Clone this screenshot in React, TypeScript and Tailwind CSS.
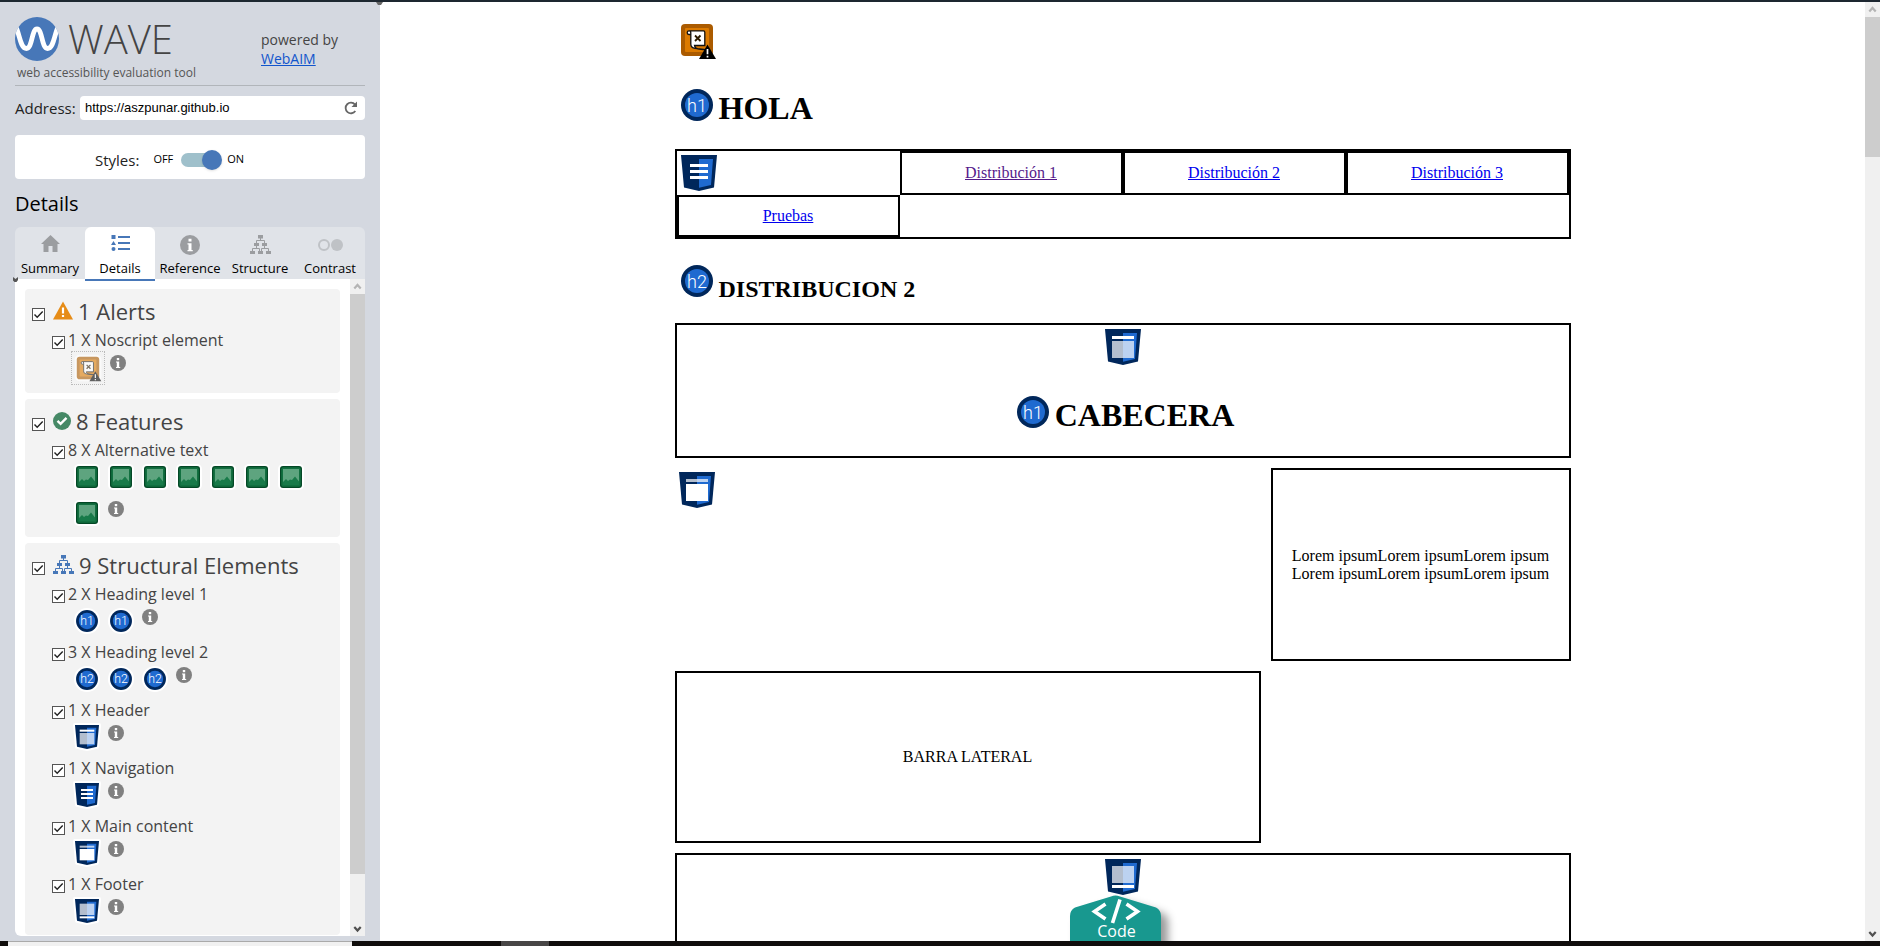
import React from "react";

type BadgeKind = "h1" | "h2" | "header" | "nav" | "main" | "footer" | "alt" | "noscript";

const shieldKinds: BadgeKind[] = ["header", "nav", "main", "footer"];

function Circle({ label }: { label: string }) {
  return (
    <g>
      <circle cx="16" cy="16" r="16" fill="#00275b" />
      <circle cx="16" cy="16" r="12" fill="#1f6ad0" />
      <text
        x="16"
        y="22.5"
        textAnchor="middle"
        fontSize="18"
        fontWeight="300"
        fontFamily="Roboto, sans-serif"
        fill="#fff"
      >
        {label}
      </text>
    </g>
  );
}

function ShieldShape({ kind }: { kind: BadgeKind }) {
  return (
    <g>
      <path d="M0 0H36L33 32.6L18 36L3 32.6Z" fill="#00275b" />
      <path d="M18 4H32L30 30L18 32.8Z" fill="#1f6ad0" />
      {kind === "header" && (
        <g fill="#fff">
          <rect x="7" y="7" width="22" height="3" />
          <rect x="7" y="12" width="22" height="17" opacity="0.7" />
        </g>
      )}
      {kind === "main" && (
        <g fill="#fff">
          <rect x="7" y="7" width="22" height="3" opacity="0.7" />
          <rect x="7" y="12" width="22" height="17" />
        </g>
      )}
      {kind === "footer" && (
        <g fill="#fff">
          <rect x="7" y="7" width="22" height="17" opacity="0.7" />
          <rect x="7" y="26" width="22" height="3" />
        </g>
      )}
      {kind === "nav" && (
        <g fill="#fff">
          <rect x="9" y="9" width="18" height="3" />
          <rect x="9" y="15" width="18" height="3" />
          <rect x="9" y="21" width="18" height="3" />
        </g>
      )}
    </g>
  );
}

function NoscriptShape() {
  return (
    <g>
      <rect width="32" height="32" rx="4" fill="#ab5b00" />
      <rect x="4" y="4" width="24" height="24" rx="1" fill="#dc7a00" />
      <path
        d="M9.8 10.5H8A1.7 1.7 0 1 1 8 6.9H22.5A1.5 1.5 0 0 1 23.8 8.3V21.5H13.5C14 25 18 25.4 25 25.6L14 24.4C10.5 24 9.8 22.5 9.8 20V9C9.8 7.6 9.2 6.9 8.5 6.9"
        fill="#fff"
        stroke="#111"
        strokeWidth="1.300"
      />
      <path d="M14 11.500L19.500 17M19.500 11.500L14 17" stroke="#2a1a00" strokeWidth="1.800" />
      <path d="M26.500 20.500L35 35H18Z" fill="#000" />
      <path d="M26.500 25V30.200M26.500 31.800V33.600" stroke="#fff" strokeWidth="1.700" />
    </g>
  );
}

function BigBadge({ kind }: { kind: BadgeKind }) {
  if (kind === "noscript")
    return (
      <svg className="block h-9 w-9" viewBox="0 0 36 36" aria-hidden="true">
        <NoscriptShape />
      </svg>
    );
  if (shieldKinds.includes(kind))
    return (
      <svg className="block h-9 w-9 shrink-0" viewBox="0 0 36 36" aria-hidden="true">
        <ShieldShape kind={kind} />
      </svg>
    );
  return (
    <svg className="block h-8 w-8 shrink-0" viewBox="0 0 32 32" aria-hidden="true">
      <Circle label={kind} />
    </svg>
  );
}

function SmallBadge({ kind }: { kind: BadgeKind }) {
  if (shieldKinds.includes(kind))
    return (
      <svg className="h-7 w-7" viewBox="-3 -3 42 42" aria-hidden="true">
        <path d="M0 0H36L33 32.6L18 36L3 32.6Z" fill="#fff" stroke="#fff" strokeWidth="6" strokeLinejoin="round" />
        <ShieldShape kind={kind} />
      </svg>
    );
  if (kind === "alt")
    return (
      <svg className="h-[26px] w-[26px]" viewBox="0 0 26 26" aria-hidden="true">
        <rect width="26" height="26" rx="5" fill="#fff" />
        <rect x="2" y="2" width="22" height="22" rx="3" fill="#044826" />
        <rect x="3.2" y="3.2" width="19.6" height="19.6" rx="2" fill="#127040" />
        <rect x="5" y="5" width="16" height="16" fill="#5ea47f" />
        <path d="M5 18L8 15L10 17L12 15.500L14 16L17 12.500L21 17.500V21H5Z" fill="#187a49" />
      </svg>
    );
  if (kind === "noscript")
    return (
      <svg className="h-[28px] w-[28px] opacity-60" viewBox="-4 -4 40 40" aria-hidden="true">
        <rect x="-3" y="-3" width="38" height="38" rx="7" fill="#fff" />
        <NoscriptShape />
      </svg>
    );
  return (
    <svg className="h-[26px] w-[26px]" viewBox="-3 -3 38 38" aria-hidden="true">
      <circle cx="16" cy="16" r="19" fill="#fff" />
      <Circle label={kind} />
    </svg>
  );
}

function InfoIcon({ className, color }: { className: string; color: string }) {
  return (
    <svg className={className} viewBox="0 0 16 16" aria-hidden="true">
      <circle cx="8" cy="8" r="8" fill={color} />
      <rect x="6.800" y="3" width="2.400" height="2.200" fill="#fff" />
      <path d="M6 6.500H9.200V12H10.200V13H6V12H6.800V7.500H6Z" fill="#fff" />
    </svg>
  );
}

function StructureIcon({ className, color }: { className: string; color: string }) {
  return (
    <svg className={className} viewBox="0 0 21 19" fill={color} aria-hidden="true">
      <rect x="8" y="0" width="5" height="3.500" />
      <rect x="4" y="8" width="5" height="3" />
      <rect x="12" y="8" width="5" height="3" />
      <rect x="0" y="16" width="5" height="3" />
      <rect x="8" y="16" width="5" height="3" />
      <rect x="16" y="16" width="5" height="3" />
      <path
        d="M10.500 3V5.500M6.500 8V5.500H14.500V8M2.500 16V13.500H8.500M6.500 11V13.500H9.500V16M14.500 11V13.500M11.500 16V13.500H18.500V16"
        fill="none"
        stroke={color}
      />
    </svg>
  );
}

function Check({ id }: { id: string }) {
  return (
    <span className="relative block h-[13px] w-[13px] shrink-0">
      <input
        id={id}
        type="checkbox"
        defaultChecked
        className="peer block h-[13px] w-[13px] appearance-none border border-[#555] bg-white"
      />
      <svg
        className="pointer-events-none absolute inset-0 hidden h-[13px] w-[13px] peer-checked:block"
        viewBox="0 0 13 13"
        aria-hidden="true"
      >
        <path d="M2.500 6.500L5.200 9.300L10.700 3.500" fill="none" stroke="#222" strokeWidth="1.400" />
      </svg>
    </span>
  );
}

function Item({ id, label, badges }: { id: string; label: string; badges: BadgeKind[] }) {
  return (
    <li>
      <div className="flex h-[22px] items-start gap-[3px] pl-[27px]">
        <span className="pt-[7px]">
          <Check id={id} />
        </span>
        <label htmlFor={id} className="text-base leading-[22px]">
          {label}
        </label>
      </div>
      <div className="flex flex-wrap gap-y-1 pb-1 pl-[45px] pr-6">
        {badges.map((kind, i) =>
          kind === "noscript" ? (
            <button
              key={i}
              aria-label={label}
              className="mx-px grid h-[34px] w-[34px] place-items-center border border-dotted border-[#bbb]"
            >
              <SmallBadge kind={kind} />
            </button>
          ) : (
            <button key={i} aria-label={label} className="grid h-8 w-[34px] place-items-center">
              <SmallBadge kind={kind} />
            </button>
          ),
        )}
        <button aria-label={"Reference: " + label} className="ml-1 mt-1 block h-4 w-4">
          <InfoIcon className="h-4 w-4" color="#808080" />
        </button>
      </div>
    </li>
  );
}

function Group({
  id,
  title,
  icon,
  children,
}: {
  id: string;
  title: string;
  icon: React.ReactNode;
  children: React.ReactNode;
}) {
  return (
    <section className="shrink-0 rounded bg-[#f3f3f3] pb-1">
      <div className="flex h-10 items-start pl-[7px]">
        <span className="pt-[19px]">
          <Check id={id} />
        </span>
        <span className="ml-2 pt-3">{icon}</span>
        <label htmlFor={id} className="ml-[5px] pt-[6px] text-[22px] leading-8">
          {title}
        </label>
      </div>
      <ul>{children}</ul>
    </section>
  );
}

function Chevron({ up, color }: { up?: boolean; color: string }) {
  return (
    <svg className="h-[15px] w-[15px] shrink-0" viewBox="0 0 15 15" aria-hidden="true">
      <path
        d={up ? "M4.300 9.500L7.500 6L10.700 9.500" : "M4.300 6L7.500 9.500L10.700 6"}
        fill="none"
        stroke={color}
        strokeWidth="2.200"
      />
    </svg>
  );
}

function Tab({ label, active, children }: { label: string; active?: boolean; children: React.ReactNode }) {
  return (
    <button
      role="tab"
      aria-selected={!!active}
      className={
        active
          ? "flex flex-col items-center rounded-t-md border-b-2 border-[#4777b8] bg-white pt-2"
          : "flex flex-col items-center border-b-2 border-transparent pt-2"
      }
    >
      <span className="flex h-[22px] items-start">{children}</span>
      <span className="text-[13px] leading-[22px] text-black">{label}</span>
    </button>
  );
}

function Sidebar() {
  return (
    <aside className="relative flex w-[380px] shrink-0 flex-col bg-[#d4d8e0] px-[15px] pb-[5px] font-['Open_Sans',sans-serif] text-[#444]">
      <header className="flex h-[84px] shrink-0 justify-between border-b border-[#b1b5ba] pt-[15px]">
        <div>
          <div className="flex h-[44px] items-center gap-[9px]">
            <svg className="h-11 w-11" viewBox="0 0 44 44" aria-hidden="true">
              <defs>
                <clipPath id="disc">
                  <circle cx="22" cy="22" r="22" />
                </clipPath>
              </defs>
              <circle cx="22" cy="22" r="22" fill="#4777b8" />
              <path
                d="M0 8C5 17 5 31.500 11.500 31.500C17.500 31.500 16.500 12 22 12C27.500 12 26.500 31.500 32.500 31.500C39 31.500 39 17 44 8"
                fill="none"
                stroke="#fff"
                strokeWidth="4.800"
                clipPath="url(#disc)"
              />
            </svg>
            <h1 className="text-[40px] font-light leading-[44px]">WAVE</h1>
          </div>
          <p className="pl-[2px] text-xs leading-6 text-[#555]">web accessibility evaluation tool</p>
        </div>
        <p className="w-[104px] pt-[13px] text-sm leading-[19px]">
          powered by
          <br />
          <a href="#webaim" className="text-[#1155cc] underline">
            WebAIM
          </a>
        </p>
      </header>

      <div className="mt-[10px] flex h-6 shrink-0 items-center justify-between">
        <label htmlFor="address" className="text-[15px] leading-[22px] text-[#222]">
          Address:
        </label>
        <div className="flex h-6 w-[285px] items-center rounded bg-white pl-[5px] pr-[7px]">
          <input
            id="address"
            type="text"
            defaultValue="https://aszpunar.github.io"
            className="min-w-0 flex-1 bg-transparent font-['Liberation_Sans',sans-serif] text-[13px] text-black outline-none"
          />
          <button aria-label="Reload">
            <svg className="block h-[14px] w-[14px]" viewBox="0 0 14 14" aria-hidden="true">
              <path d="M11.300 10A5.300 5.300 0 1 1 11 3.600" fill="none" stroke="#666" strokeWidth="1.800" />
              <path d="M13 0.500V6H7.500Z" fill="#666" />
            </svg>
          </button>
        </div>
      </div>

      <div className="mt-[15px] flex h-11 shrink-0 items-center rounded bg-white pl-20 pt-[5px]">
        <label htmlFor="styles" className="text-[15px] leading-6 text-[#222]">
          Styles:
        </label>
        <span className="ml-[14px] text-[11px] text-black">OFF</span>
        <span className="relative ml-2 block h-5 w-[41px]">
          <input
            id="styles"
            type="checkbox"
            role="switch"
            defaultChecked
            className="peer mt-[3px] block h-[14px] w-10 appearance-none rounded-full bg-[#9fc0cb]"
          />
          <span className="pointer-events-none absolute left-0 top-0 h-5 w-5 rounded-full bg-[#4777b8] shadow peer-checked:left-[21px]" />
        </span>
        <span className="ml-[5px] text-[11px] text-black">ON</span>
      </div>

      <h2 className="mt-[9px] h-[39px] shrink-0 text-xl leading-[31px] text-black">Details</h2>

      <div className="relative shrink-0">
        <div role="tablist" className="grid h-[52px] grid-cols-5 rounded-t-md bg-[#e0e3e8]">
          <Tab label="Summary">
            <svg className="h-[17px] w-[19px]" viewBox="0 0 19 17" fill="#9b9da0" aria-hidden="true">
              <path d="M9.500 0L19 9H16.500V17H11.500V11H7.500V17H2.500V9H0Z" />
            </svg>
          </Tab>
          <Tab label="Details" active>
            <svg className="h-4 w-[19px]" viewBox="0 0 19 16" fill="#4777b8" aria-hidden="true">
              <rect x="0.500" y="0" width="4" height="4" />
              <path d="M2.500 6L5 10H0Z" />
              <circle cx="2.500" cy="14" r="2" />
              <rect x="7" y="1" width="12" height="2" />
              <rect x="7" y="7" width="12" height="2" />
              <rect x="7" y="13" width="12" height="2" />
            </svg>
          </Tab>
          <Tab label="Reference">
            <InfoIcon className="h-5 w-5" color="#9b9da0" />
          </Tab>
          <Tab label="Structure">
            <StructureIcon className="h-[19px] w-[21px]" color="#9b9da0" />
          </Tab>
          <Tab label="Contrast">
            <svg className="h-5 w-[26px]" viewBox="0 0 26 20" aria-hidden="true">
              <circle cx="7" cy="10" r="5" fill="none" stroke="#bfc2c6" strokeWidth="2" />
              <circle cx="20" cy="10" r="6" fill="#bfc2c6" />
            </svg>
          </Tab>
        </div>
        <svg className="absolute -bottom-[3px] -left-[2px] h-[5px] w-[5px]" viewBox="0 0 5 5" aria-hidden="true">
          <path d="M0 0L2.500 2L5 0V3L3.500 5H1.500L0 3.500Z" fill="#555" />
        </svg>
      </div>

      <div className="flex min-h-0 flex-1 overflow-hidden rounded-bl-md bg-white">
        <div className="flex min-w-0 flex-1 flex-col gap-[6px] overflow-hidden p-[10px]">
          <Group
            id="alerts"
            title="1 Alerts"
            icon={
              <svg className="h-[19px] w-5" viewBox="0 0 20 19" aria-hidden="true">
                <path d="M10 0.500L20 18.500H0Z" fill="#e68c17" />
                <path d="M10 6.500V12.500M10 14V16" stroke="#fff" strokeWidth="2.200" />
              </svg>
            }
          >
            <Item id="noscript" label="1 X Noscript element" badges={["noscript"]} />
          </Group>
          <Group
            id="features"
            title="8 Features"
            icon={
              <svg className="h-[19px] w-[18px]" viewBox="0 0 18 19" aria-hidden="true">
                <circle cx="9" cy="10" r="9" fill="#468966" />
                <path d="M4.500 9.800L7.600 12.800L13.500 6.800" fill="none" stroke="#fff" strokeWidth="2.400" />
              </svg>
            }
          >
            <Item
              id="alt-text"
              label="8 X Alternative text"
              badges={["alt", "alt", "alt", "alt", "alt", "alt", "alt", "alt"]}
            />
          </Group>
          <Group
            id="structural"
            title="9 Structural Elements"
            icon={<StructureIcon className="h-[19px] w-[21px]" color="#4777b8" />}
          >
            <Item id="heading-1" label="2 X Heading level 1" badges={["h1", "h1"]} />
            <Item id="heading-2" label="3 X Heading level 2" badges={["h2", "h2", "h2"]} />
            <Item id="header" label="1 X Header" badges={["header"]} />
            <Item id="navigation" label="1 X Navigation" badges={["nav"]} />
            <Item id="main-content" label="1 X Main content" badges={["main"]} />
            <Item id="footer" label="1 X Footer" badges={["footer"]} />
          </Group>
        </div>
        <div className="flex w-[15px] shrink-0 flex-col bg-[#f0f0f0]">
          <Chevron up color="#b4b4b4" />
          <div className="h-[580px] shrink-0 bg-[#cdcdcd]" />
          <div className="flex-1" />
          <Chevron color="#505050" />
        </div>
      </div>

      <svg className="absolute -right-[3px] top-0 z-10 h-[3px] w-[7px]" viewBox="0 0 7 3" aria-hidden="true">
        <path d="M0 0H7L5 3H2Z" fill="#666" />
      </svg>
    </aside>
  );
}

function CodeHexagon() {
  return (
    <svg className="mr-[15px] block h-[104px] w-[91px] shrink-0 overflow-visible" viewBox="0 0 91 104" aria-label="Code">
      <path
        d="M41 1.500Q45.500 -0.500 50 1.500L86 12.500Q91 15 91 21V83Q91 89 86 91L50 103Q45.500 105 41 103L5 91Q0 89 0 83V21Q0 15 5 12.500Z"
        fill="#18988f"
        className="drop-shadow-[7px_6px_4px_rgba(0,0,0,0.4)]"
      />
      <path
        d="M35.500 9L24.500 16.500L35.500 24M56.500 9L67.500 16.500L56.500 24M50 4.500L42.500 28"
        fill="none"
        stroke="#fff"
        strokeWidth="3.600"
      />
      <text x="46.500" y="42" textAnchor="middle" fontSize="16" fontFamily="Open Sans, sans-serif" fill="#fff">
        Code
      </text>
    </svg>
  );
}

const links = [
  { text: "Distribución 1", className: "text-[#551a8b] underline" },
  { text: "Distribución 2", className: "text-[#0000ee] underline" },
  { text: "Distribución 3", className: "text-[#0000ee] underline" },
  { text: "Pruebas", className: "text-[#0000ee] underline" },
];

function Page() {
  return (
    <div className="flex min-w-0 flex-1 flex-col overflow-hidden bg-white font-['Liberation_Serif',serif] text-base leading-[18px] text-black">
      <div className="mx-auto w-[calc(60%+5px)] pt-[22px]">
        <div className="pl-[6px]">
          <BigBadge kind="noscript" />
        </div>
        <div className="mt-[29px] flex items-start gap-[6px] pl-[6px]">
          <BigBadge kind="h1" />
          <h1 className="pt-[3px] text-[32px] font-bold leading-8">HOLA</h1>
        </div>

        <nav className="mt-[25px] grid grid-cols-4 border-2 border-black">
          <div className="p-1">
            <BigBadge kind="nav" />
          </div>
          {links.map((link) => (
            <div key={link.text} className="flex min-h-[42px] items-center justify-center border-2 border-black">
              <a href={"#" + link.text} className={link.className}>
                {link.text}
              </a>
            </div>
          ))}
        </nav>

        <div className="mt-[26px] flex items-start gap-[6px] pl-[6px]">
          <BigBadge kind="h2" />
          <h2 className="pt-3 text-2xl font-bold leading-6">DISTRIBUCION 2</h2>
        </div>

        <header className="mt-[22px] flex flex-col items-center border-2 border-black pb-[25px] pt-1">
          <BigBadge kind="header" />
          <div className="mt-[31px] flex items-start gap-[6px] pl-[6px]">
            <BigBadge kind="h1" />
            <h1 className="pt-[3px] text-[32px] font-bold leading-8">CABECERA</h1>
          </div>
        </header>

        <main className="mt-[10px] grid grid-cols-[1fr_300px] gap-[10px]">
          <div className="pl-1 pt-1">
            <BigBadge kind="main" />
          </div>
          <section className="flex h-[193px] items-center justify-center border-2 border-black">
            <p>
              Lorem ipsumLorem ipsumLorem ipsum
              <br />
              Lorem ipsumLorem ipsumLorem ipsum
            </p>
          </section>
          <aside className="flex h-[172px] items-center justify-center border-2 border-black">BARRA LATERAL</aside>
        </main>

        <footer className="mt-[10px] flex flex-col items-center border-2 border-black pb-6 pt-1">
          <BigBadge kind="footer" />
          <CodeHexagon />
        </footer>
      </div>
    </div>
  );
}

export default function App() {
  return (
    <div className="flex h-screen flex-col overflow-hidden">
      <div className="h-[2px] shrink-0 bg-[#1d2730]" />
      <div className="flex min-h-0 flex-1">
        <Sidebar />
        <Page />
        <div className="flex w-[15px] shrink-0 flex-col bg-[#f0f0f0]">
          <Chevron up color="#b4b4b4" />
          <div className="h-[140px] shrink-0 bg-[#cdcdcd]" />
          <div className="flex-1" />
          <Chevron color="#505050" />
        </div>
      </div>
      <div className="flex h-[5px] shrink-0 bg-[#100d0c] pl-2">
        <div className="w-[344px] border-t border-[#aaa] bg-[#f1f1f1]" />
        <div className="ml-[149px] w-12 bg-[#484646]" />
      </div>
    </div>
  );
}
